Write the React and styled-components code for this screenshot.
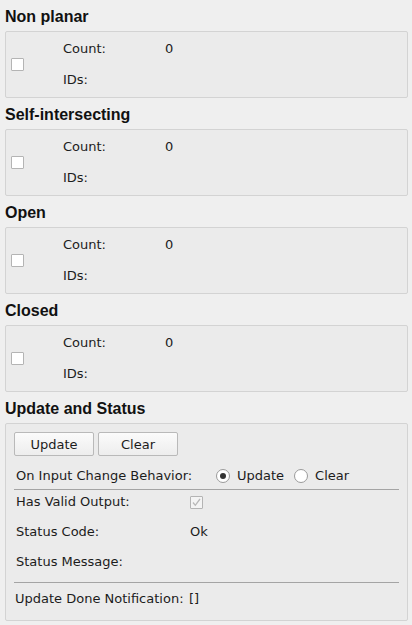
import React from "react";
import styled, { createGlobalStyle } from "styled-components";

const Global = createGlobalStyle`
  html, body { margin: 0; padding: 0; background: #efefef; }
  body { font-family: "DejaVu Sans", "Noto Sans", sans-serif; font-size: 13px; color: #1c1c1c; }
  * { box-sizing: border-box; }
`;

const Page = styled.div`
  width: 412px;
  height: 625px;
  padding: 0 4px 0 5px;
  background: #efefef;
  overflow: hidden;
`;

const SectionTitle = styled.div`
  font-family: "Liberation Sans", Arial, sans-serif;
  font-weight: bold;
  font-size: 16px;
  color: #111;
  height: 31px;
  padding-top: 2px;
  line-height: 29px;
  white-space: nowrap;
`;

const Box = styled.div`
  border: 1px solid #d3d3d3;
  border-radius: 2px;
  background: #ebebeb;
`;

const InfoGrid = styled(Box)`
  display: grid;
  grid-template-columns: 57px 102px 1fr;
  grid-template-rows: 31px 31px;
  padding: 1px 0 2px;
`;

const CheckCell = styled.div`
  grid-row: 1 / span 2;
  align-self: center;
  padding-left: 5px;
  display: flex;
`;

const CheckBox = styled.span`
  width: 13px;
  height: 13px;
  border: 1px solid #b4b4b4;
  border-radius: 1px;
  background: ${(p) => (p.disabled ? "#f4f4f4" : "#ffffff")};
  display: flex;
  align-items: center;
  justify-content: center;
`;

const Cell = styled.div`
  line-height: 31px;
  white-space: nowrap;
`;

const StatusBox = styled(Box)`
  padding: 8px 8px 9px 8px;
  display: flex;
  flex-direction: column;
`;

const ButtonRow = styled.div`
  display: flex;
  gap: 4px;
`;

const Button = styled.button`
  width: 80px;
  height: 24px;
  padding: 0;
  font-family: "DejaVu Sans", sans-serif;
  font-size: 13px;
  color: #1c1c1c;
  background: linear-gradient(#fbfbfb, #ededed);
  border: 1px solid #b9b9b9;
  border-radius: 2px;
`;

const Row = styled.div`
  display: flex;
  align-items: center;
  height: 24px;
  line-height: 24px;
  padding-left: ${(p) => p.$indent ?? 2}px;
  margin-top: ${(p) => p.$mt ?? 0}px;
  white-space: nowrap;
`;

const Label = styled.span`
  width: ${(p) => p.$w ?? 174}px;
  flex: none;
`;

const Separator = styled.div`
  height: 1px;
  background: #a4a4a4;
  margin-top: ${(p) => p.$mt}px;
`;

const StatusGrid = styled.div`
  display: flex;
  flex-direction: column;
  gap: 6px;
`;

const Radio = styled.span`
  width: 14px;
  height: 14px;
  border-radius: 50%;
  border: 1px solid #9a9a9a;
  background: #fff;
  display: flex;
  align-items: center;
  justify-content: center;
  flex: none;
  margin-left: ${(p) => p.$ml}px;
  margin-right: 7px;
  &::after {
    content: "";
    width: 6px;
    height: 6px;
    border-radius: 50%;
    background: ${(p) => (p.$checked ? "#333" : "transparent")};
  }
`;

const sections = ["Non planar", "Self-intersecting", "Open", "Closed"];

function Section({ title }) {
  return (
    <div>
      <SectionTitle>{title}</SectionTitle>
      <InfoGrid>
        <CheckCell>
          <CheckBox />
        </CheckCell>
        <Cell>Count:</Cell>
        <Cell>0</Cell>
        <Cell>IDs:</Cell>
        <Cell />
      </InfoGrid>
    </div>
  );
}

export default function App() {
  return (
    <Page>
      <Global />
      {sections.map((s) => (
        <Section key={s} title={s} />
      ))}
      <SectionTitle>Update and Status</SectionTitle>
      <StatusBox>
        <ButtonRow>
          <Button>Update</Button>
          <Button>Clear</Button>
        </ButtonRow>
        <Row $mt={8}>
          <Label $w={200}>On Input Change Behavior:</Label>
          <Radio $checked $ml={0} />
          <span>Update</span>
          <Radio $ml={10} />
          <span>Clear</span>
        </Row>
        <Separator $mt={1} />
        <StatusGrid>
          <Row>
            <Label>Has Valid Output:</Label>
            <CheckBox disabled>
              <svg width="11" height="11" viewBox="0 0 11 11">
                <path d="M2 5.5 L4.3 8.3 L9 2" fill="none" stroke="#b8b8b8" strokeWidth="1.3" />
              </svg>
            </CheckBox>
          </Row>
          <Row>
            <Label>Status Code:</Label>
            <span>Ok</span>
          </Row>
          <Row>
            <Label>Status Message:</Label>
          </Row>
        </StatusGrid>
        <Separator $mt={8} />
        <Row $mt={4} $indent={1}>
          <Label $w={174}>Update Done Notification:</Label>
          <span>[]</span>
        </Row>
      </StatusBox>
    </Page>
  );
}
